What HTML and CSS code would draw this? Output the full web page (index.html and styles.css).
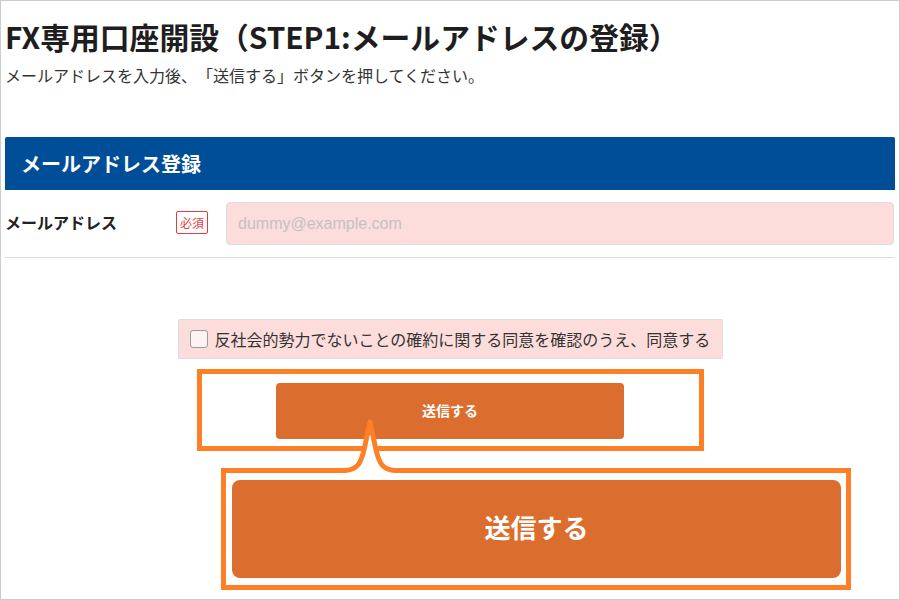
FILE: index.html
```html
<!DOCTYPE html>
<html lang="ja">
<head>
<meta charset="utf-8">
<title>FX専用口座開設</title>
<link rel="stylesheet" href="styles.css">
</head>
<body>
<div class="frame">
  <h1 class="title">FX専用口座開設（STEP1:メールアドレスの登録）</h1>
  <p class="lead">メールアドレスを入力後、「送信する」ボタンを押してください。</p>

  <section class="panel">
    <h2 class="panel-head">メールアドレス登録</h2>
    <div class="row">
      <div class="row-label">メールアドレス</div>
      <span class="badge">必須</span>
      <div class="input"><span class="placeholder">dummy@example.com</span></div>
    </div>
  </section>

  <div class="agree-wrap">
    <label class="agree"><span class="checkbox"></span><span class="agree-text">反社会的勢力でないことの確約に関する同意を確認のうえ、同意する</span></label>
  </div>

  <div class="highlight">
    <div class="btn btn-small">送信する</div>
  </div>

  <div class="callout">
    <div class="btn btn-large">送信する</div>
  </div>
  <svg class="pointer" width="60" height="70" viewBox="0 0 60 70">
    <path d="M6 63 L6 60.5 C18 60.5 21 52 24 40 L30 12 L36 40 C39 52 42 60.5 54 60.5 L54 63 Z" fill="#ffffff"/>
    <path d="M4 60.5 C18 60.5 21 52 24 40 L30 12 L36 40 C39 52 42 60.5 56 60.5" fill="none" stroke="#ff7f27" stroke-width="5" stroke-linejoin="round"/>
  </svg>
</div>
</body>
</html>
```
FILE: styles.css
```css
html, body {
  margin: 0;
  padding: 0;
  background: #ffffff;
}
.frame {
  position: relative;
  width: 900px;
  height: 600px;
  box-sizing: border-box;
  border: 1px solid #cccccc;
  padding: 0 4px;
  font-family: "Noto Sans CJK JP", "Noto Sans", sans-serif;
  color: #222222;
  overflow: hidden;
  text-spacing-trim: space-all;
}
.title {
  margin: 16px 0 0;
  font-size: 29.8px;
  line-height: 38px;
  font-weight: 700;
  color: #1e1e1e;
  letter-spacing: 0;
}
.lead {
  margin: 8px 0 0;
  font-size: 16px;
  line-height: 24px;
  color: #333333;
}
.panel {
  margin-top: 50px;
}
.panel-head {
  margin: 0;
  height: 53px;
  display: flex;
  align-items: center;
  padding-left: 16px;
  padding-bottom: 1px;
  box-sizing: border-box;
  background: #004e97;
  color: #ffffff;
  font-size: 20px;
  font-weight: 700;
  border-radius: 2px 2px 0 0;
}
.row {
  display: flex;
  align-items: center;
  padding: 12px 0 12px;
  border-bottom: 1px solid #dddddd;
}
.row-label {
  width: 171px;
  font-size: 16px;
  font-weight: 700;
  color: #222222;
  margin-bottom: 3px;
}
.badge {
  box-sizing: border-box;
  width: 32px;
  height: 23px;
  display: flex;
  align-items: center;
  justify-content: center;
  border: 1px solid #e43c3c;
  border-radius: 2px;
  color: #e43c3c;
  font-size: 12px;
  background: #ffffff;
  margin-right: 18px;
  margin-bottom: 3px;
}
.input {
  flex: 1;
  box-sizing: border-box;
  height: 43px;
  display: flex;
  align-items: center;
  padding-left: 11px;
  background: #fddcdc;
  border: 1px solid #dddddd;
  border-radius: 4px;
  margin-right: 1px;
}
.placeholder {
  font-family: "Liberation Sans", Arial, sans-serif;
  font-size: 16px;
  color: #c2c2c2;
}
.agree-wrap {
  display: flex;
  justify-content: center;
  margin-top: 61px;
}
.agree {
  box-sizing: border-box;
  width: 545px;
  height: 40px;
  display: flex;
  align-items: center;
  padding-left: 11px;
  background: #fddcdc;
  border: 1px solid #dddddd;
  border-radius: 2px;
}
.checkbox {
  box-sizing: border-box;
  width: 18px;
  height: 18px;
  border: 1.5px solid #9a9a9a;
  border-radius: 3px;
  background: #fdf3f3;
  margin-right: 7px;
  flex: none;
}
.agree-text {
  font-size: 16px;
  color: #333333;
  white-space: nowrap;
}
.highlight {
  box-sizing: border-box;
  width: 507px;
  margin: 10px auto 0;
  border: 5px solid #ff7f27;
  padding: 9px 0 7px;
  display: flex;
  justify-content: center;
}
.btn {
  display: flex;
  align-items: center;
  justify-content: center;
  background: #db6e2f;
  color: #ffffff;
  font-weight: 700;
}
.btn-small {
  width: 348px;
  height: 56px;
  border-radius: 4px;
  font-size: 14px;
  box-sizing: border-box;
  padding-bottom: 2px;
}
.callout {
  position: absolute;
  left: 220px;
  top: 467px;
  box-sizing: border-box;
  width: 630px;
  height: 122px;
  border: 5px solid #ff7f27;
  background: #ffffff;
  padding: 7px 5px 7px 6px;
  display: flex;
}
.btn-large {
  flex: 1;
  border-radius: 8px;
  font-size: 26px;
  padding-bottom: 6px;
}
.pointer {
  position: absolute;
  left: 339px;
  top: 409px;
}
```
